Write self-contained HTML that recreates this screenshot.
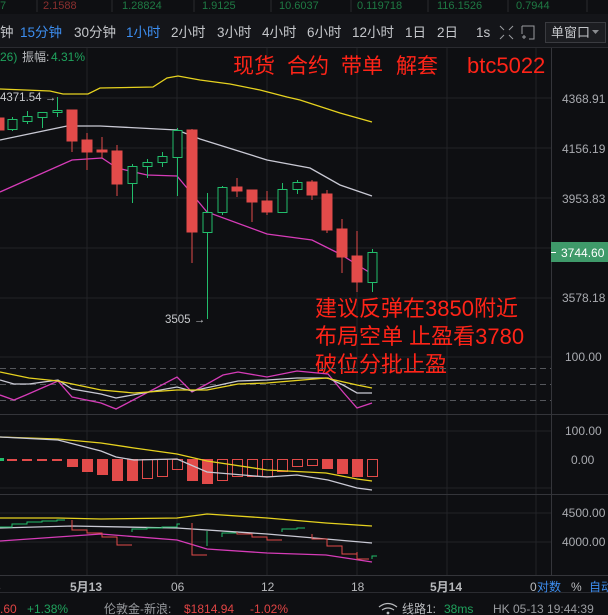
<!DOCTYPE html><html><head><meta charset="utf-8"><style>
body{margin:0;background:#0e0f12;width:608px;height:615px;overflow:hidden;font-family:"Liberation Sans","Noto Sans CJK SC",sans-serif}
svg{display:block}
text{font-family:"Liberation Sans","Noto Sans CJK SC",sans-serif}
</style></head><body>
<svg width="608" height="615" viewBox="0 0 608 615" xmlns="http://www.w3.org/2000/svg">
<rect width="608" height="615" fill="#0e0f12"/>
<g font-size="11" fill="#1f7a44">
<text x="0" y="9">7</text>
<text x="43" y="9" fill="#8a2f2f">2.1588</text>
<text x="122" y="9">1.28824</text><text x="202" y="9">1.9125</text><text x="279" y="9">10.6037</text>
<text x="357" y="9">0.119718</text><text x="437" y="9">116.1526</text><text x="516" y="9">0.7944</text>
</g>
<g stroke="#2a2b2f"><line x1="37" y1="0" x2="37" y2="12"/><line x1="112" y1="0" x2="112" y2="12"/><line x1="194" y1="0" x2="194" y2="12"/><line x1="271" y1="0" x2="271" y2="12"/><line x1="351" y1="0" x2="351" y2="12"/><line x1="428" y1="0" x2="428" y2="12"/><line x1="508" y1="0" x2="508" y2="12"/><line x1="587" y1="0" x2="587" y2="12"/></g>
<rect x="0" y="14" width="608" height="33" fill="#141519"/>
<g font-size="13.5" fill="#c4c6ca">
<text x="0" y="37">钟</text>
<text x="20" y="37" fill="#3d8ef0">15分钟</text>
<text x="74" y="37">30分钟</text>
<text x="126" y="37" fill="#3d8ef0">1小时</text>
<text x="171" y="37">2小时</text><text x="217" y="37">3小时</text><text x="262" y="37">4小时</text><text x="307" y="37">6小时</text><text x="352" y="37">12小时</text><text x="405" y="37">1日</text><text x="437" y="37">2日</text><text x="476" y="37">1s</text>
</g>
<g stroke="#9a9ca0" fill="none" stroke-width="1">
<path d="M500 26l4 4M513 26l-4 4M500 39l4-4M513 39l-4-4"/>
<path d="M522 26h12v13h-5M522 26v8M522 37h4M524 35v4"/>
</g>
<rect x="545.5" y="22.5" width="60" height="20" fill="#1c1d21" stroke="#3a3b40"/>
<text x="551" y="37" font-size="13" fill="#c4c6ca">单窗口</text>
<path d="M592 30h7l-3.5 4z" fill="#8a8c90"/>
<line x1="0" y1="47.5" x2="608" y2="47.5" stroke="#2a2b30"/>
<g stroke="#222327" stroke-width="1">
<line x1="87" y1="48" x2="87" y2="575"/><line x1="177" y1="48" x2="177" y2="575"/><line x1="267" y1="48" x2="267" y2="575"/><line x1="357" y1="48" x2="357" y2="575"/><line x1="447" y1="48" x2="447" y2="575"/><line x1="536" y1="48" x2="536" y2="575"/>
<line x1="0" y1="98" x2="551" y2="98"/><line x1="0" y1="148" x2="551" y2="148"/><line x1="0" y1="198" x2="551" y2="198"/><line x1="0" y1="248" x2="551" y2="248"/><line x1="0" y1="298" x2="551" y2="298"/>
<line x1="0" y1="357" x2="551" y2="357"/><line x1="0" y1="431" x2="551" y2="431"/><line x1="0" y1="488" x2="551" y2="488"/><line x1="0" y1="513" x2="551" y2="513"/><line x1="0" y1="542" x2="551" y2="542"/>
</g>
<g stroke="#34353a"><line x1="0" y1="414.5" x2="608" y2="414.5"/><line x1="0" y1="494.5" x2="608" y2="494.5"/><line x1="0" y1="575.5" x2="608" y2="575.5"/><line x1="551.5" y1="48" x2="551.5" y2="575"/></g>
<line x1="0" y1="592.5" x2="608" y2="592.5" stroke="#2a2b30"/>
<text x="0" y="61" font-size="12" fill="#1fa35d">26)</text>
<text x="22" y="61" font-size="12" fill="#b8babd">振幅:</text>
<text x="51" y="61" font-size="12" fill="#1fa35d">4.31%</text>
<g font-size="21" fill="#ff2418">
<text x="233" y="73">现货</text><text x="287" y="73">合约</text><text x="341" y="73">带单</text><text x="396" y="73">解套</text>
<text x="467" y="73" font-size="22">btc5022</text>
<text x="315" y="316" font-size="22">建议反弹在3850附近</text>
<text x="315" y="344" font-size="22">布局空单  止盈看3780</text>
<text x="315" y="372" font-size="22">破位分批止盈</text>
</g>
<g fill="none" stroke-width="1.3">
<polyline stroke="#e6d21f" points="0,89 50,91 63,94 88,94 100,88 153,87 167,78 178,76 200,80 230,84 260,90 287,97 300,100 340,113 372,122"/>
<polyline stroke="#c9c9d4" points="0,140 67,126 100,126 177,130 200,139 267,160 310,168 340,185 372,196"/>
<polyline stroke="#d63cb8" points="0,192 72,160 102,158 117,168 147,175 177,176 207,212 267,234 312,240 340,254 372,274"/>
</g>
<g fill="#e24b4a" stroke="#e24b4a">
<rect x="-4" y="118" width="8" height="12"/>
<line x1="72" y1="110" x2="72" y2="152"/><rect x="67" y="110" width="10" height="31"/>
<line x1="87" y1="133" x2="87" y2="170"/><rect x="82" y="140" width="10" height="12"/>
<line x1="102" y1="137" x2="102" y2="158"/><rect x="97" y="150" width="10" height="2"/>
<line x1="117" y1="145" x2="117" y2="196"/><rect x="112" y="151" width="10" height="33"/>
<line x1="192" y1="129" x2="192" y2="263"/><rect x="187" y="130" width="10" height="102"/>
<line x1="237" y1="178" x2="237" y2="197"/><rect x="232" y="187" width="10" height="4"/>
<line x1="252" y1="190" x2="252" y2="222"/><rect x="247" y="190" width="10" height="12"/>
<line x1="267" y1="191" x2="267" y2="215"/><rect x="262" y="201" width="10" height="11"/>
<line x1="312" y1="180" x2="312" y2="200"/><rect x="307" y="182" width="10" height="13"/>
<line x1="327" y1="190" x2="327" y2="233"/><rect x="322" y="194" width="10" height="36"/>
<line x1="342" y1="219" x2="342" y2="273"/><rect x="337" y="229" width="10" height="28"/>
<line x1="357" y1="231" x2="357" y2="292"/><rect x="352" y="256" width="10" height="26"/>
</g>
<g fill="none" stroke="#22bd6b" stroke-width="1">
<path d="M12.5 117v14M27.5 111v13M42.5 112v16M57.5 97v20M132.5 164v39M147.5 159v19M162.5 152v15M177.5 128v68M207.5 193v126M222.5 186v29M282.5 183v29M297.5 180v14M372.5 249v43"/>
<g fill="#0e0f12">
<rect x="8" y="119.5" width="9" height="10"/><rect x="23" y="116.5" width="9" height="5"/><rect x="38" y="112.5" width="9" height="5"/><rect x="53" y="110.5" width="9" height="2"/>
<rect x="128" y="166.5" width="9" height="17"/><rect x="143" y="162.5" width="9" height="4"/><rect x="158" y="156.5" width="9" height="6"/><rect x="173" y="130.5" width="9" height="27"/>
<rect x="203" y="212.5" width="9" height="20"/><rect x="218" y="187.5" width="9" height="25"/><rect x="278" y="189.5" width="9" height="23"/><rect x="293" y="182.5" width="9" height="7"/><rect x="368" y="252.5" width="9" height="30"/>
</g></g>
<text x="0" y="101" font-size="11.5" fill="#c8cacd">4371.54 →</text>
<line x1="57.5" y1="97" x2="57.5" y2="110" stroke="#22bd6b"/>
<text x="165" y="323" font-size="11.5" fill="#c8cacd">3505 →</text>
<g font-size="12" fill="#a9abb0">
<text x="562" y="103">4368.91</text><text x="562" y="153">4156.19</text><text x="562" y="203">3953.83</text><text x="562" y="302">3578.18</text>
<text x="565" y="361">100.00</text><text x="565" y="435">100.00</text><text x="571" y="464">0.00</text><text x="562" y="517">4500.00</text><text x="562" y="546">4000.00</text>
</g>
<rect x="551" y="242" width="57" height="20" fill="#3f9a6a"/>
<line x1="551" y1="252.5" x2="556" y2="252.5" stroke="#fff"/>
<text x="561" y="257" font-size="12" fill="#fff">3744.60</text>
<g stroke="#55575c" stroke-dasharray="6,4"><line x1="0" y1="368.5" x2="551" y2="368.5"/><line x1="0" y1="384.5" x2="551" y2="384.5"/><line x1="0" y1="400.5" x2="551" y2="400.5"/></g>
<g fill="none" stroke-width="1.3">
<polyline stroke="#d63cb8" points="0,395 14,400 26,395 58,381 72,397 101,403 116,409 177,377 192,392 207,384 223,375 238,372 267,377 297,371 328,374 343,392 357,408 372,403"/>
<polyline stroke="#c9c9d4" points="0,380 14,384 29,384 58,380 72,389 101,394 116,398 177,387 192,391 238,381 267,380 297,378 328,378 343,385 357,393 372,393"/>
<polyline stroke="#e6d21f" points="0,372 29,378 58,381 101,390 134,393 177,390 207,390 238,384 267,383 326,378 357,385 372,388"/>
</g>
<g fill="#e24b4a">
<rect x="7" y="459" width="10" height="2"/><rect x="22" y="459" width="10" height="2"/><rect x="37" y="459" width="10" height="2"/><rect x="52" y="459" width="10" height="2"/>
<rect x="67" y="459" width="11" height="8"/><rect x="82" y="459" width="11" height="13"/><rect x="97" y="459" width="11" height="16"/><rect x="112" y="459" width="11" height="22"/><rect x="127" y="459" width="11" height="22"/>
<rect x="187" y="459" width="11" height="22"/><rect x="202" y="459" width="11" height="25"/>
<rect x="322" y="459" width="11" height="10"/><rect x="337" y="459" width="11" height="15"/><rect x="352" y="459" width="11" height="18"/>
</g>
<rect x="0" y="458" width="4" height="3" fill="#22bd6b"/>
<g fill="none" stroke="#e24b4a">
<rect x="142.5" y="459.5" width="10" height="19"/><rect x="157.5" y="459.5" width="10" height="17"/><rect x="172.5" y="459.5" width="10" height="10"/>
<rect x="217.5" y="459.5" width="10" height="21"/><rect x="232.5" y="459.5" width="10" height="17"/><rect x="247.5" y="459.5" width="10" height="17"/><rect x="262.5" y="459.5" width="10" height="17"/><rect x="277.5" y="459.5" width="10" height="12"/><rect x="292.5" y="459.5" width="10" height="7"/><rect x="307.5" y="459.5" width="10" height="6"/><rect x="367.5" y="459.5" width="10" height="17"/>
</g>
<g fill="none" stroke-width="1.3">
<polyline stroke="#e6d21f" points="0,437 58,439 101,443 134,448 177,454 207,461 267,470 326,473 357,479 372,481"/>
<polyline stroke="#c9c9d4" points="0,437 58,440 101,451 116,457 134,460 177,459 207,472 267,477 297,475 328,480 357,488 372,490"/>
</g>
<g fill="none" stroke-width="1.3">
<polyline stroke="#e6d21f" points="0,518 58,518 101,519 177,518 207,514 267,518 326,523 372,526"/>
<polyline stroke="#c9c9d4" points="0,528 72,526 177,528 267,534 326,539 372,543"/>
<polyline stroke="#d63cb8" points="0,541 72,536 101,534 177,540 207,549 267,553 326,555 372,562"/>
</g>
<g fill="none" stroke-width="1">
<path stroke="#22bd6b" d="M0 527h12v-3h15v-2h15v-1h15v-1h8M132 532v-3h15v-1h15v-1h15v-3h3M207 546v-15M222 537v-4h15M282 532v-3h15v-1h8M372 559v-3h5"/>
<path stroke="#e24b4a" d="M72 520v10h15v3h15v4h15v8h15M192 523v32h15M237 532v2h15v3h15v3h15M312 534v5h15v7h15v8h15v5h12M357 552v8"/>
</g>
<g font-size="12" fill="#b8babd">
<text x="-6" y="591">3</text>
<text x="70" y="591" font-weight="bold">5月13</text>
<text x="171" y="591">06</text><text x="261" y="591">12</text><text x="351" y="591">18</text>
<text x="430" y="591" font-weight="bold">5月14</text>
<text x="530" y="591">0</text><text x="537" y="591" fill="#3d8ef0">对数</text><text x="571" y="591">%</text><text x="589" y="591" fill="#3d8ef0">自动</text>
</g>
<g font-size="12">
<text x="0" y="613" fill="#e04444">.60</text>
<text x="27" y="613" fill="#1fa35d">+1.38%</text>
<text x="104" y="613" fill="#9a9ca0">伦敦金-新浪:</text>
<text x="184" y="613" fill="#e04444">$1814.94</text>
<text x="250" y="613" fill="#e04444">-1.02%</text>
<g fill="none" stroke="#b8babd" stroke-width="1.3"><path d="M379 607q9-7 18 0M382 610q6-4 12 0"/></g><circle cx="388" cy="613" r="1.4" fill="#b8babd"/>
<text x="402" y="613" fill="#b8babd">线路1:</text>
<text x="444" y="613" fill="#1fa35d">38ms</text>
<text x="493" y="613" fill="#9a9ca0">HK 05-13 19:44:39</text>
</g>
</svg>
</body></html>
